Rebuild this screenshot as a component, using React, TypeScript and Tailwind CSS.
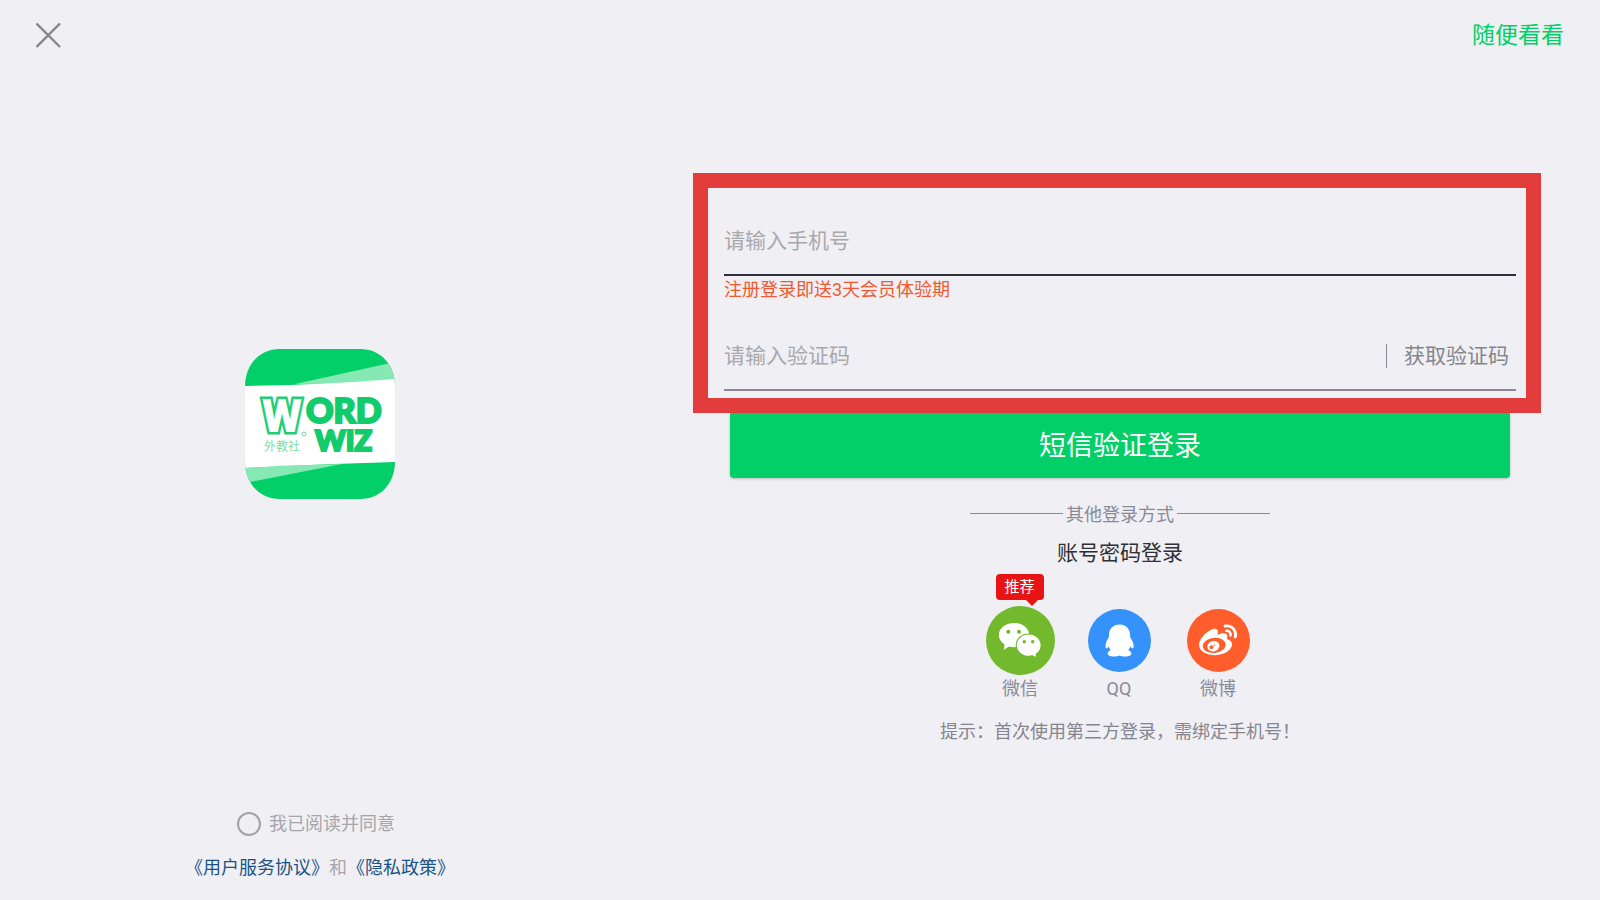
import { ReactNode, useState } from "react"
import { FaWeibo } from "react-icons/fa"

interface ISocialButton {
    label: string,
    badge?: string,
    children: ReactNode,
}

function Logo() {
    return (
        <svg viewBox="0 0 150 150" className="size-[150px]" role="img" aria-label="Word Wiz">
            <defs>
                <clipPath id="logo-shape">
                    <path d="M35 0H115C136 0 150 16 150 38V112C150 134 136 150 115 150H35C14 150 0 134 0 112V38C0 16 14 0 35 0Z" />
                </clipPath>
            </defs>
            <g clipPath="url(#logo-shape)">
                <rect width="150" height="150" fill="#02cf67" />
                <path d="M50 35L150 13V34Z" fill="#86e8b2" />
                <path d="M0 37Q75 36 150 30V113Q75 115 0 119Z" fill="#fff" />
                <path d="M0 119Q50 116 97 115L0 134Z" fill="#86e8b2" />
            </g>
            <text x="17" y="83" fontSize="46" fontFamily="Roboto, sans-serif" fontWeight="900" fill="#fff" stroke="#1fce75" strokeWidth="5" paintOrder="stroke">W</text>
            <g fontFamily="Lato, sans-serif" fontWeight="900" fill="#12cc6c" stroke="#12cc6c" strokeWidth="2.2">
                <text x="61" y="74" fontSize="34">ORD</text>
                <text x="70" y="102" fontSize="29">WIZ</text>
            </g>
            <text x="19" y="102" fontSize="12" fill="#7fdcaa" fontFamily="'Noto Sans CJK SC', sans-serif">外教社</text>
            <circle cx="59" cy="85" r="2" fill="none" stroke="#6fdba1" />
        </svg>
    )
}

function WechatIcon() {
    return (
        <svg viewBox="0 0 69 69" className="size-[69px]" aria-hidden="true">
            <circle cx="34.5" cy="34.5" r="34.5" fill="#72b92d" />
            <path d="M28 17C19.500 17 12.800 22.300 12.800 29.100C12.800 33 15 36.300 18.600 38.600L17.700 43.800L23.200 40.600C24.700 41 26.300 41.200 28 41.200C36.500 41.200 43.200 35.900 43.200 29.100C43.200 22.300 36.500 17 28 17Z" fill="#fff" />
            <circle cx="22.300" cy="25.700" r="2" fill="#72b92d" />
            <circle cx="33" cy="25.700" r="2" fill="#72b92d" />
            <path d="M42.700 28C35.700 28 30.200 33 30.200 39.200C30.200 45.400 35.700 50.300 42.700 50.300C44 50.300 45.300 50.100 46.500 49.800L51 52L50.200 48.300C53.300 46.200 55.200 43 55.200 39.200C55.200 33 49.700 28 42.700 28Z" fill="#fff" stroke="#72b92d" strokeWidth="1.200" />
            <circle cx="38.300" cy="35.700" r="1.700" fill="#72b92d" />
            <circle cx="46.700" cy="35.700" r="1.700" fill="#72b92d" />
        </svg>
    )
}

function QQIcon() {
    return (
        <svg viewBox="0 0 63 63" className="size-[63px]" aria-hidden="true">
            <circle cx="31.5" cy="31.5" r="31.5" fill="#3492fa" />
            <path d="M31.500 15.500C25 15.500 21 20 21 26C21 27.200 20.700 28 20.400 29.200C18.600 31.500 17.500 34.500 17.500 37.300C17.500 39.400 18.300 39.800 19.400 38.900L20.700 37.600C21.200 39.200 21.800 40.200 22.800 41.200C20.800 41.900 19.600 43 19.600 44.500C19.600 46.600 22.300 47.500 25.500 47.500C28 47.500 30.200 47.200 31.500 46.400C32.800 47.200 35 47.500 37.500 47.500C40.700 47.500 43.400 46.600 43.400 44.500C43.400 43 42.200 41.900 40.200 41.200C41.200 40.200 41.800 39.200 42.300 37.600L43.600 38.900C44.700 39.800 45.700 39.400 45.700 37.300C45.700 34.500 44.400 31.500 42.600 29.200C42.300 28 42 27.200 42 26C42 20 38 15.500 31.500 15.500Z" fill="#fff" />
        </svg>
    )
}

function SocialButton({ label, badge, children }: ISocialButton) {
    return (
        <button type="button" className="relative flex w-[69px] cursor-pointer flex-col items-center">
            {badge && (
                <span className="absolute -top-8 left-2.5 h-[26px] w-12 rounded-sm bg-[#e81414] text-center text-[15px] leading-[26px] text-white">
                    {badge}
                    <svg viewBox="0 0 12 6" className="absolute top-full right-1.5 h-1.5 w-3" aria-hidden="true">
                        <path d="M0 0H12L6 6Z" fill="#e81414" />
                    </svg>
                </span>
            )}
            <span className="flex h-[69px] items-center">{children}</span>
            <span className="text-lg leading-7 text-[#8a8a96]">{label}</span>
        </button>
    )
}

function App() {
    const [phone, setPhone] = useState("")
    const [code, setCode] = useState("")
    const [agreed, setAgreed] = useState(false)

    return (
        <div className="flex min-h-screen flex-col bg-[#efeff4] font-[Roboto,'Noto_Sans_CJK_SC',sans-serif]">
            {/* header */}
            <header className="flex h-[70px] items-center justify-between px-9">
                <button type="button" aria-label="关闭" className="cursor-pointer">
                    <svg viewBox="0 0 25 25" className="size-[25px]" fill="none" stroke="#87878b" strokeWidth="2.4">
                        <path d="M0.500 0.500L24 24M24 0.500L0.500 24" />
                    </svg>
                </button>
                <a href="#" className="pt-0.5 text-[23px] text-[#02cf67]">随便看看</a>
            </header>

            <main className="flex flex-1">
                {/* logo and agreement */}
                <section className="flex w-2/5 flex-col items-center justify-between pt-[279px] pb-[18px]">
                    <Logo />
                    <div className="flex flex-col items-center gap-4 text-lg leading-7 text-[#a6a6aa]">
                        <label className="flex items-center gap-2 pr-2">
                            <input
                                type="checkbox"
                                checked={agreed}
                                onChange={(e) => setAgreed(e.target.checked)}
                                className="size-6 appearance-none rounded-full border-2 border-[#a2a2a6] checked:bg-[#02cf67]"
                            />
                            我已阅读并同意
                        </label>
                        <p>
                            <a href="#" className="text-[#1c5383]">《用户服务协议》</a>
                            和
                            <a href="#" className="text-[#1c5383]">《隐私政策》</a>
                        </p>
                    </div>
                </section>

                {/* login form */}
                <section className="w-3/5 pt-[103px]">
                    <form onSubmit={(e) => e.preventDefault()}>
                        <div className="mr-[59px] ml-[53px] border-[15px] border-[#e33c3c] pt-5 pr-2.5 pb-[7px] pl-4">
                            <input
                                type="tel"
                                aria-label="手机号"
                                placeholder="请输入手机号"
                                value={phone}
                                onChange={(e) => setPhone(e.target.value)}
                                className="block h-[68px] w-full border-b-2 border-[#30303a] text-[21px] outline-none placeholder:text-[#a9a9ad]"
                            />
                            <p className="text-lg leading-[27px] text-[#f15a31]">注册登录即送3天会员体验期</p>
                            <div className="mt-5 flex h-[68px] items-center border-b-2 border-[#8e8892] pr-[7px]">
                                <input
                                    type="text"
                                    aria-label="验证码"
                                    placeholder="请输入验证码"
                                    value={code}
                                    onChange={(e) => setCode(e.target.value)}
                                    className="h-full min-w-0 flex-1 text-[21px] outline-none placeholder:text-[#a9a9ad]"
                                />
                                <span className="h-6 w-px bg-[#8a8a92]" />
                                <button type="button" className="cursor-pointer pt-0.5 pl-[17px] text-[21px] text-[#85858c]">获取验证码</button>
                            </div>
                        </div>
                        <div className="px-[90px]">
                            <button
                                type="submit"
                                className="h-[65px] w-full cursor-pointer rounded-b-sm bg-[#02cf67] pt-0.5 text-[27px] text-white shadow-[0_1px_3px_rgba(0,0,0,0.2)]"
                            >
                                短信验证登录
                            </button>
                        </div>
                    </form>

                    {/* other ways to log in */}
                    <div className="flex flex-col items-center">
                        <div className="mt-[23px] flex w-[300px] items-center gap-[3px] text-lg leading-7 text-[#8a8a96]">
                            <span className="mb-[3px] h-px flex-1 bg-[#8a8a96]" />
                            其他登录方式
                            <span className="mb-[3px] h-px flex-1 bg-[#8a8a96]" />
                        </div>
                        <a href="#" className="mt-2.5 text-[21px] leading-7 text-[#303034]">账号密码登录</a>
                        <div className="mt-[39px] flex gap-[30px] pr-0.5">
                            <SocialButton label="微信" badge="推荐">
                                <WechatIcon />
                            </SocialButton>
                            <SocialButton label="QQ">
                                <QQIcon />
                            </SocialButton>
                            <SocialButton label="微博">
                                <span className="flex size-[63px] items-center justify-center rounded-full bg-[#ff5d2b]">
                                    <FaWeibo className="size-[38px] text-white" />
                                </span>
                            </SocialButton>
                        </div>
                        <p className="mt-[15px] text-lg leading-7 text-[#85858f]">提示：首次使用第三方登录，需绑定手机号！</p>
                    </div>
                </section>
            </main>
        </div>
    )
}

export default App
